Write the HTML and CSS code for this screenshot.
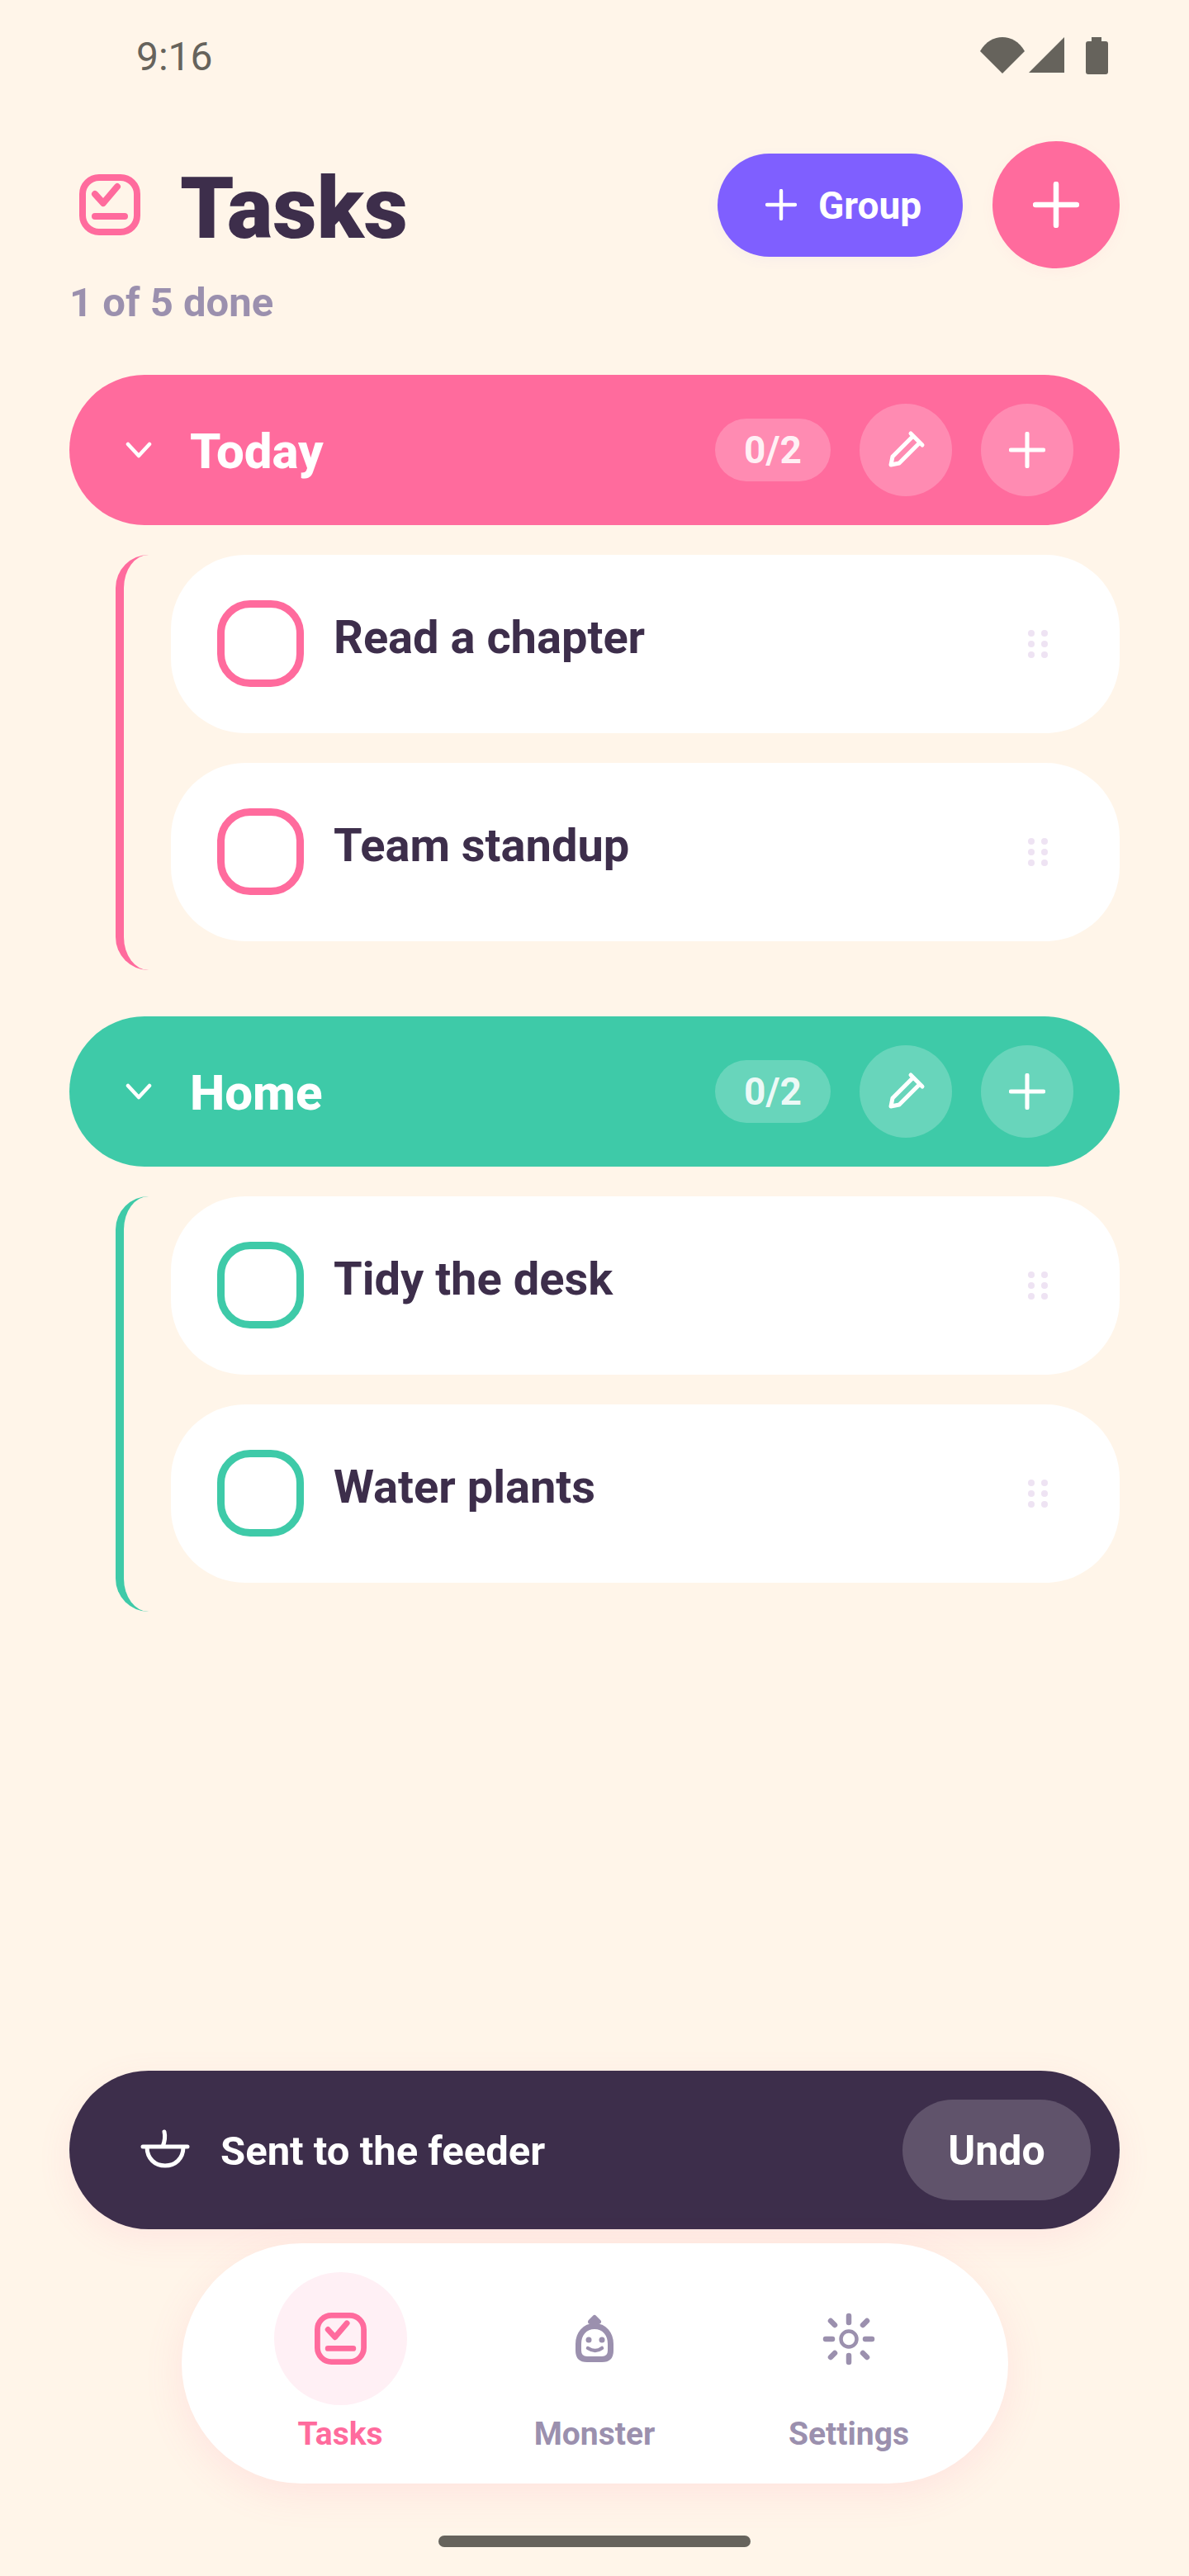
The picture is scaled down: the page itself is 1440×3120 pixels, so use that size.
FILE: index.html
```html
<!DOCTYPE html>
<html lang="en">
<head>
    <meta charset="UTF-8">
    <meta name="viewport" content="width=device-width, initial-scale=1.0">
    <title>Tasks</title>
    <link rel="stylesheet" href="styles.css">
</head>
<body>
    <svg class="defs" width="0" height="0">
        <symbol id="i-tasks" viewBox="0 0 74 74">
            <rect x="4" y="4" width="66" height="66" rx="20" fill="none" stroke="currentColor" stroke-width="8"/>
            <path d="M19 24 L29 35 L46 15 M19 51 H55" fill="none" stroke="currentColor" stroke-width="8" stroke-linecap="round" stroke-linejoin="round"/>
        </symbol>
        <symbol id="i-plus" viewBox="0 0 56 56">
            <path d="M28 3 V53 M3 28 H53" fill="none" stroke="currentColor" stroke-width="6.5" stroke-linecap="round"/>
        </symbol>
        <symbol id="i-chevron" viewBox="0 0 32 20">
            <path d="M3 3 L16 17 L29 3" fill="none" stroke="currentColor" stroke-width="4.5" stroke-linecap="round" stroke-linejoin="round"/>
        </symbol>
        <symbol id="i-pencil" viewBox="0 0 70 70">
            <path d="M17 53 L19 43 L44 18 L52 26 L27 51 Z M41 15 L55 29" fill="none" stroke="currentColor" stroke-width="5" stroke-linejoin="round" stroke-linecap="round"/>
        </symbol>
        <symbol id="i-dots" viewBox="0 0 24 34">
            <g fill="currentColor">
                <circle cx="4" cy="4" r="4"/><circle cx="20" cy="4" r="4"/>
                <circle cx="4" cy="17" r="4"/><circle cx="20" cy="17" r="4"/>
                <circle cx="4" cy="30" r="4"/><circle cx="20" cy="30" r="4"/>
            </g>
        </symbol>
    </svg>

    <div class="status-bar">
        <span class="time">9:16</span>
        <div class="status-icons">
            <svg class="wifi" viewBox="0 0 54 44"><path d="M0 17 C7 5 17 0 27 0 C37 0 47 5 54 17 L27 44 Z"/></svg>
            <svg class="signal" viewBox="0 0 43 43"><path d="M43 0 V43 H0 Z"/></svg>
            <svg class="battery" viewBox="0 0 27 45"><path d="M7 0 H19 V5 H24 Q27 5 27 8 V42 Q27 45 24 45 H3 Q0 45 0 42 V8 Q0 5 3 5 H7 Z"/></svg>
        </div>
    </div>

    <main class="content">
        <header class="top">
            <svg class="title-icon"><use href="#i-tasks"/></svg>
            <h1 class="title">Tasks</h1>
            <button class="btn-group">
                <svg class="plus-group"><use href="#i-plus"/></svg>
                Group
            </button>
            <button class="fab"><svg class="plus-fab"><use href="#i-plus"/></svg></button>
        </header>
        <p class="progress">1 of 5 done</p>

        <section class="group pink">
            <div class="group-head">
                <svg class="chevron"><use href="#i-chevron"/></svg>
                <span class="group-name">Today</span>
                <span class="count">0/2</span>
                <button class="round"><svg class="pencil"><use href="#i-pencil"/></svg></button>
                <button class="round"><svg class="plus-small"><use href="#i-plus"/></svg></button>
            </div>
            <div class="rail">
                <div class="task">
                    <span class="check"></span>
                    <span class="task-name">Read a chapter</span>
                    <svg class="drag"><use href="#i-dots"/></svg>
                </div>
                <div class="task">
                    <span class="check"></span>
                    <span class="task-name">Team standup</span>
                    <svg class="drag"><use href="#i-dots"/></svg>
                </div>
            </div>
        </section>

        <section class="group teal">
            <div class="group-head">
                <svg class="chevron"><use href="#i-chevron"/></svg>
                <span class="group-name">Home</span>
                <span class="count">0/2</span>
                <button class="round"><svg class="pencil"><use href="#i-pencil"/></svg></button>
                <button class="round"><svg class="plus-small"><use href="#i-plus"/></svg></button>
            </div>
            <div class="rail">
                <div class="task">
                    <span class="check"></span>
                    <span class="task-name">Tidy the desk</span>
                    <svg class="drag"><use href="#i-dots"/></svg>
                </div>
                <div class="task">
                    <span class="check"></span>
                    <span class="task-name">Water plants</span>
                    <svg class="drag"><use href="#i-dots"/></svg>
                </div>
            </div>
        </section>
    </main>

    <div class="snackbar">
        <svg class="bowl" viewBox="0 0 80 70">
            <path d="M13 31 H67 M18 31 C18 46 28 54 40 54 C52 54 62 46 62 31 M39 13 Q41 21 37 31" fill="none" stroke="currentColor" stroke-width="5" stroke-linecap="round"/>
        </svg>
        <span class="snack-text">Sent to the feeder</span>
        <button class="undo">Undo</button>
    </div>

    <nav class="nav">
        <div class="nav-item active">
            <span class="nav-icon"><svg class="nav-tasks"><use href="#i-tasks"/></svg></span>
            <span class="nav-label">Tasks</span>
        </div>
        <div class="nav-item">
            <span class="nav-icon">
                <svg class="nav-svg" viewBox="0 2 80 100">
                    <path d="M20.5 58 C20.5 46 28 36.5 40 36.5 C52 36.5 59.5 46 59.5 58 V66 Q59.5 76.5 49 76.5 H31 Q20.5 76.5 20.5 66 Z" fill="none" stroke="currentColor" stroke-width="7"/>
                    <path d="M35 31 L40 26 L45 31 Z" fill="currentColor" stroke="currentColor" stroke-width="6" stroke-linejoin="round"/>
                    <circle cx="33" cy="53" r="3.5" fill="currentColor"/>
                    <circle cx="49" cy="53" r="3.5" fill="currentColor"/>
                    <path d="M32 63 Q41 69 49 63" fill="none" stroke="currentColor" stroke-width="4.5" stroke-linecap="round"/>
                </svg>
            </span>
            <span class="nav-label">Monster</span>
        </div>
        <div class="nav-item">
            <span class="nav-icon">
                <svg class="nav-svg" viewBox="-40 -50 80 100">
                    <circle r="9.5" fill="none" stroke="currentColor" stroke-width="4.5"/>
                    <path d="M0 -28 V-20 M0 28 V20 M-28 0 H-20 M28 0 H20 M-22 -22 L-17 -17 M22 -22 L17 -17 M-22 22 L-17 17 M22 22 L17 17" fill="none" stroke="currentColor" stroke-width="6.5" stroke-linecap="round"/>
                </svg>
            </span>
            <span class="nav-label">Settings</span>
        </div>
    </nav>

    <div class="home-bar"></div>
</body>
</html>
```

FILE: styles.css
```css
* {
    box-sizing: border-box;
}

body {
    margin: 0;
    width: 1440px;
    height: 3120px;
    display: flex;
    flex-direction: column;
    background-color: #fff5e9;
    color: #3d2e4b;
    font-family: Roboto, "Liberation Sans", sans-serif;
}

button {
    border: 0;
    padding: 0;
    font-family: inherit;
    color: white;
    cursor: pointer;
}

svg {
    display: block;
}

.defs {
    position: absolute;
}

/* status bar */
.status-bar {
    height: 171px;
    flex: none;
    display: flex;
    justify-content: space-between;
    align-items: flex-start;
    padding: 41px 98px 0 165px;
    color: #66635c;
}

.time {
    font-size: 48px;
    line-height: 56px;
}

.status-icons {
    display: flex;
    align-items: flex-start;
    padding-top: 4px;
}

.status-icons svg {
    fill: #66635c;
}

.wifi {
    width: 54px;
    height: 44px;
}

.signal {
    width: 43px;
    height: 43px;
    margin-left: 5px;
}

.battery {
    width: 27px;
    height: 45px;
    margin-left: 26px;
}

/* header */
.content {
    flex: 1;
    padding: 0 84px;
}

.top {
    display: flex;
    align-items: center;
    height: 154px;
}

.title-icon {
    width: 74px;
    height: 74px;
    margin-left: 12px;
    color: #ff6b9d;
}

.title {
    flex: 1;
    margin: 10px 0 0 48px;
    font-size: 104px;
    font-weight: 900;
    line-height: 120px;
}

.btn-group {
    width: 297px;
    height: 125px;
    display: flex;
    align-items: center;
    padding: 2px 0 0 58px;
    gap: 26px;
    border-radius: 63px;
    background-color: #7f5fff;
    font-size: 46px;
    font-weight: 700;
    box-shadow: 0 4px 16px rgba(127, 95, 255, 0.05);
}

.plus-group {
    width: 38px;
    height: 38px;
    margin-top: -2px;
}

.fab {
    width: 154px;
    height: 154px;
    margin-left: 36px;
    display: flex;
    align-items: center;
    justify-content: center;
    border-radius: 50%;
    background-color: #ff6b9d;
    box-shadow: 0 4px 16px rgba(255, 107, 157, 0.05);
}

.plus-fab {
    width: 56px;
    height: 56px;
}

.progress {
    margin: 14px 0 0;
    height: 115px;
    font-size: 49px;
    font-weight: 700;
    line-height: 56px;
    color: #9b90ae;
}

/* groups */
.group {
    margin-bottom: 56px;
}

.pink {
    --accent: #ff6b9d;
}

.teal {
    --accent: #3ecaa8;
}

.group-head {
    height: 182px;
    display: flex;
    align-items: center;
    padding: 0 56px 0 68px;
    border-radius: 91px;
    background-color: var(--accent);
    color: white;
}

.chevron {
    width: 32px;
    height: 20px;
}

.group-name {
    flex: 1;
    margin: 3px 0 0 46px;
    font-size: 60px;
    font-weight: 800;
    line-height: 70px;
}

.count {
    width: 140px;
    height: 76px;
    border-radius: 38px;
    background-color: rgba(255, 255, 255, 0.22);
    color: rgba(255, 255, 255, 0.9);
    font-size: 46px;
    font-weight: 700;
    line-height: 76px;
    text-align: center;
}

.round {
    width: 112px;
    height: 112px;
    margin-left: 35px;
    display: flex;
    align-items: center;
    justify-content: center;
    border-radius: 50%;
    background-color: rgba(255, 255, 255, 0.22);
}

.pencil {
    width: 70px;
    height: 70px;
}

.plus-small {
    width: 44px;
    height: 44px;
}

.rail {
    display: flex;
    flex-direction: column;
    gap: 36px;
    margin: 36px 0 0 56px;
    padding: 0 0 35px 57px;
    border-left: 10px solid var(--accent);
    border-radius: 40px;
}

.task {
    height: 216px;
    display: flex;
    align-items: center;
    padding: 0 56px;
    border-radius: 90px;
    background-color: white;
}

.check {
    width: 105px;
    height: 105px;
    flex: none;
    margin-bottom: 2px;
    border: 9px solid var(--accent);
    border-radius: 40px;
}

.task-name {
    flex: 1;
    margin: 0 0 16px 36px;
    font-size: 56px;
    font-weight: 700;
    line-height: 64px;
}

.drag {
    width: 24px;
    height: 34px;
    margin-right: 31px;
    color: #eee3f3;
}

/* snackbar + nav */
.snackbar {
    flex: none;
    height: 192px;
    margin: 0 84px;
    display: flex;
    align-items: center;
    padding: 0 35px 0 76px;
    border-radius: 96px;
    background-color: #3d2e4b;
    color: white;
    box-shadow: 0 12px 40px rgba(255, 107, 157, 0.1);
}

.bowl {
    width: 80px;
    height: 70px;
}

.snack-text {
    flex: 1;
    margin: 2px 0 0 27px;
    font-size: 49px;
    font-weight: 700;
}

.undo {
    width: 228px;
    height: 122px;
    padding-top: 2px;
    border-radius: 61px;
    background-color: rgba(255, 255, 255, 0.18);
    font-size: 50px;
    font-weight: 700;
}

.nav {
    flex: none;
    width: 1001px;
    height: 291px;
    margin: 17px 0 0 220px;
    display: flex;
    padding: 35px 38px 0;
    border-radius: 146px;
    background-color: white;
    box-shadow: 0 12px 48px rgba(255, 107, 157, 0.12);
}

.nav-item {
    width: 308px;
    display: flex;
    flex-direction: column;
    align-items: center;
    color: #9b90ae;
}

.nav-icon {
    width: 161px;
    height: 161px;
    display: flex;
    align-items: center;
    justify-content: center;
    border-radius: 50%;
}

.nav-svg {
    width: 80px;
    height: 100px;
}

.nav-tasks {
    width: 63px;
    height: 63px;
}

.nav-label {
    margin-top: 12px;
    font-size: 39px;
    font-weight: 700;
    line-height: 46px;
}

.nav-item.active {
    color: #ff6b9d;
}

.active .nav-icon {
    background-color: #fff0f5;
}

.home-bar {
    flex: none;
    width: 378px;
    height: 14px;
    margin: 63px 0 35px 531px;
    border-radius: 7px;
    background-color: #66635c;
}
```
